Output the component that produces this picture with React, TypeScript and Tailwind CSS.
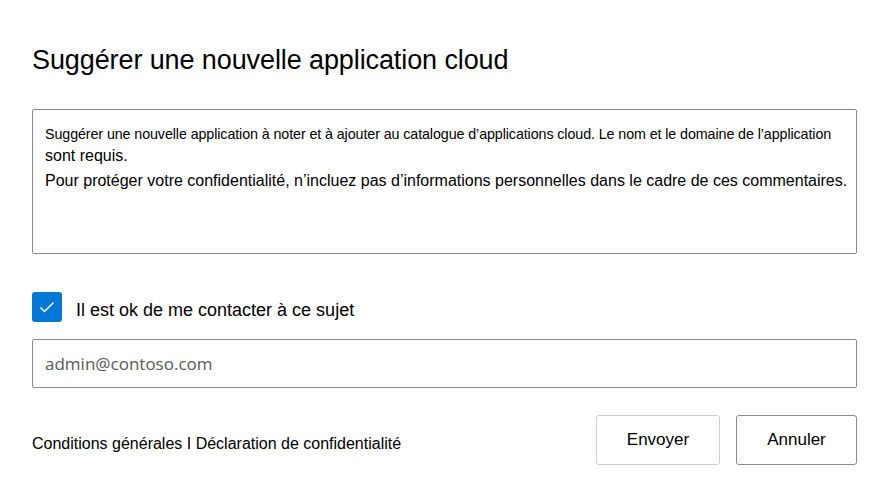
import React from 'react';

const App: React.FC = () => {
  return (
    <div className="w-[885px] h-[491px] bg-white px-8 pt-[43px] text-black" style={{ fontFamily: '"Liberation Sans", Arial, sans-serif' }}>
      <h1 className="text-[27px] leading-[34px] tracking-[-0.1px]">Suggérer une nouvelle application cloud</h1>
      <div className="mt-[32px] w-[825px] h-[145px] border border-[#8a8a8a] rounded-[2px] px-3 pt-[15px]">
        <p className="text-[14.3px] leading-[18px] tracking-[-0.1px] whitespace-nowrap">Suggérer une nouvelle application à noter et à ajouter au catalogue d’applications cloud. Le nom et le domaine de l’application</p>
        <p className="text-[16px] leading-[25px]">sont requis.</p>
        <p className="text-[16px] leading-[25px] whitespace-nowrap">Pour protéger votre confidentialité, n’incluez pas d’informations personnelles dans le cadre de ces commentaires.</p>
      </div>
      <div className="mt-[35px] flex items-center gap-[14px]">
        <div className="w-[30px] h-[30px] rounded-[3px] bg-[#0078d4] flex items-center justify-center">
          <svg width="16" height="12" viewBox="0 0 16 12" fill="none"><path d="M1.5 6.5 L5.5 10.5 L14.5 1.5" stroke="white" strokeWidth="1.5" /></svg>
        </div>
        <span className="text-[18px] mt-[8px]">Il est ok de me contacter à ce sujet</span>
      </div>
      <div className="mt-[15px] w-[825px] h-[49px] border border-[#8a8a8a] rounded-[2px] px-3 flex items-center">
        <span className="text-[17px] text-[#5a5a5a]" style={{ fontFamily: '"Open Sans", "Noto Sans", sans-serif' }}>admin@contoso.com</span>
      </div>
      <div className="mt-[27px] w-[825px] flex items-center">
        <span className="text-[16px] mt-[8px]">Conditions générales I Déclaration de confidentialité</span>
        <div className="ml-auto flex gap-4">
          <button className="w-[124px] h-[50px] border border-[#d0d0d0] rounded-[3px] text-[17px]">Envoyer</button>
          <button className="w-[121px] h-[50px] border border-[#8a8a8a] rounded-[3px] text-[17px]">Annuler</button>
        </div>
      </div>
    </div>
  );
};

export default App;
